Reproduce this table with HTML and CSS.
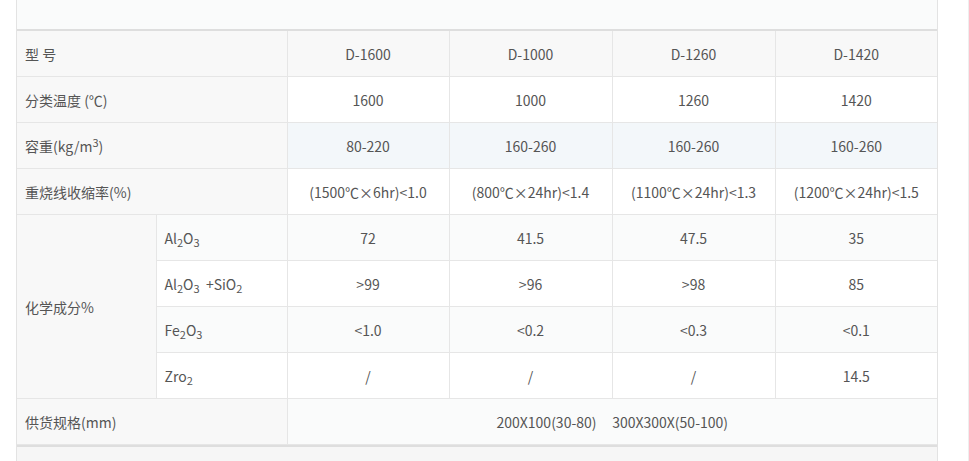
FILE: index.html
```html
<!DOCTYPE html>
<html lang="zh-CN">
<head>
<meta charset="utf-8">
<title>产品参数</title>
<link rel="stylesheet" href="styles.css">
</head>
<body>
<div class="page">
  <div class="wrap">
    <div class="top"></div>
    <table class="spec">
      <colgroup>
        <col class="c1"><col class="c2"><col class="c3"><col class="c4"><col class="c5"><col class="c6">
      </colgroup>
      <tbody>
        <tr class="head">
          <td colspan="2" class="lbl">型 号</td>
          <td>D-1600</td><td>D-1000</td><td>D-1260</td><td>D-1420</td>
        </tr>
        <tr>
          <td colspan="2" class="lbl">分类温度 (℃)</td>
          <td>1600</td><td>1000</td><td>1260</td><td>1420</td>
        </tr>
        <tr class="hover">
          <td colspan="2" class="lbl">容重(kg/m<sup>3</sup>)</td>
          <td>80-220</td><td>160-260</td><td>160-260</td><td>160-260</td>
        </tr>
        <tr>
          <td colspan="2" class="lbl">重烧线收缩率(%)</td>
          <td>(1500℃×6hr)&lt;1.0</td><td>(800℃×24hr)&lt;1.4</td><td>(1100℃×24hr)&lt;1.3</td><td>(1200℃×24hr)&lt;1.5</td>
        </tr>
        <tr class="stripe">
          <td rowspan="4" class="lbl group">化学成分%</td>
          <td class="sub">Al<sub>2</sub>O<sub>3</sub></td>
          <td>72</td><td>41.5</td><td>47.5</td><td>35</td>
        </tr>
        <tr>
          <td class="sub">Al<sub>2</sub>O<sub>3</sub>&nbsp; +SiO<sub>2</sub></td>
          <td>&gt;99</td><td>&gt;96</td><td>&gt;98</td><td>85</td>
        </tr>
        <tr class="stripe">
          <td class="sub">Fe<sub>2</sub>O<sub>3</sub></td>
          <td>&lt;1.0</td><td>&lt;0.2</td><td>&lt;0.3</td><td>&lt;0.1</td>
        </tr>
        <tr>
          <td class="sub">Zro<sub>2</sub></td>
          <td>/</td><td>/</td><td>/</td><td>14.5</td>
        </tr>
        <tr class="stripe">
          <td colspan="2" class="lbl">供货规格(mm)</td>
          <td colspan="4" class="wide">200X100(30-80)&nbsp;&nbsp;&nbsp;&nbsp; 300X300X(50-100)</td>
        </tr>
      </tbody>
    </table>
    <div class="bottom"></div>
  </div>
  <div class="edge"></div>
</div>
</body>
</html>
```
FILE: styles.css
```css
html, body {
  margin: 0;
  padding: 0;
  background: #fff;
}
body {
  font-family: "Noto Sans CJK SC", "Noto Sans", sans-serif;
  font-size: 14px;
  color: #555;
}
.page {
  display: flex;
  height: 461px;
  overflow: hidden;
}
.wrap {
  margin-left: 16px;
  width: 920px;
  border-left: 1px solid #e3e3e3;
  border-right: 1px solid #e3e3e3;
}
.edge {
  margin-left: auto;
  width: 1px;
  background: #eeeeee;
}
.top {
  height: 29px;
  background: #fafbfb;
  border-bottom: 2px solid #dedede;
}
.spec {
  width: 100%;
  border-collapse: collapse;
  table-layout: fixed;
}
.c1 { width: 139px; }
.c2 { width: 131px; }
.c3 { width: 162px; }
.c4 { width: 163px; }
.c5 { width: 163px; }
.c6 { width: 162px; }
.spec td {
  height: 45px;
  padding: 0 8px;
  border: 1px solid #e6e6e6;
  text-align: center;
  vertical-align: middle;
  white-space: nowrap;
  line-height: 20px;
}
.spec tr:first-child td { border-top: 0; }
.spec tr td:first-child { border-left: 0; }
.spec tr td:last-child { border-right: 0; }
.spec .lbl {
  text-align: left;
  background: #f8f8f8;
}
.spec .sub {
  text-align: left;
}
.spec .head td { background: #f8f8f8; }
.spec .hover td { background: #f3f7fa; }
.spec .hover td.lbl { background: #f8f8f8; }
.spec .stripe td { background: #fafbfb; }
.spec .stripe td.lbl { background: #f8f8f8; }
.spec .group { background: #f9f9f9; }
.spec .wide { text-align: center; }
sub, sup {
  font-size: 11px;
  line-height: 0;
}
sub { vertical-align: -3px; }
sup { vertical-align: 5px; }
.bottom {
  height: 20px;
  background: #f6f6f6;
  border-top: 2px solid #dedede;
}
```
